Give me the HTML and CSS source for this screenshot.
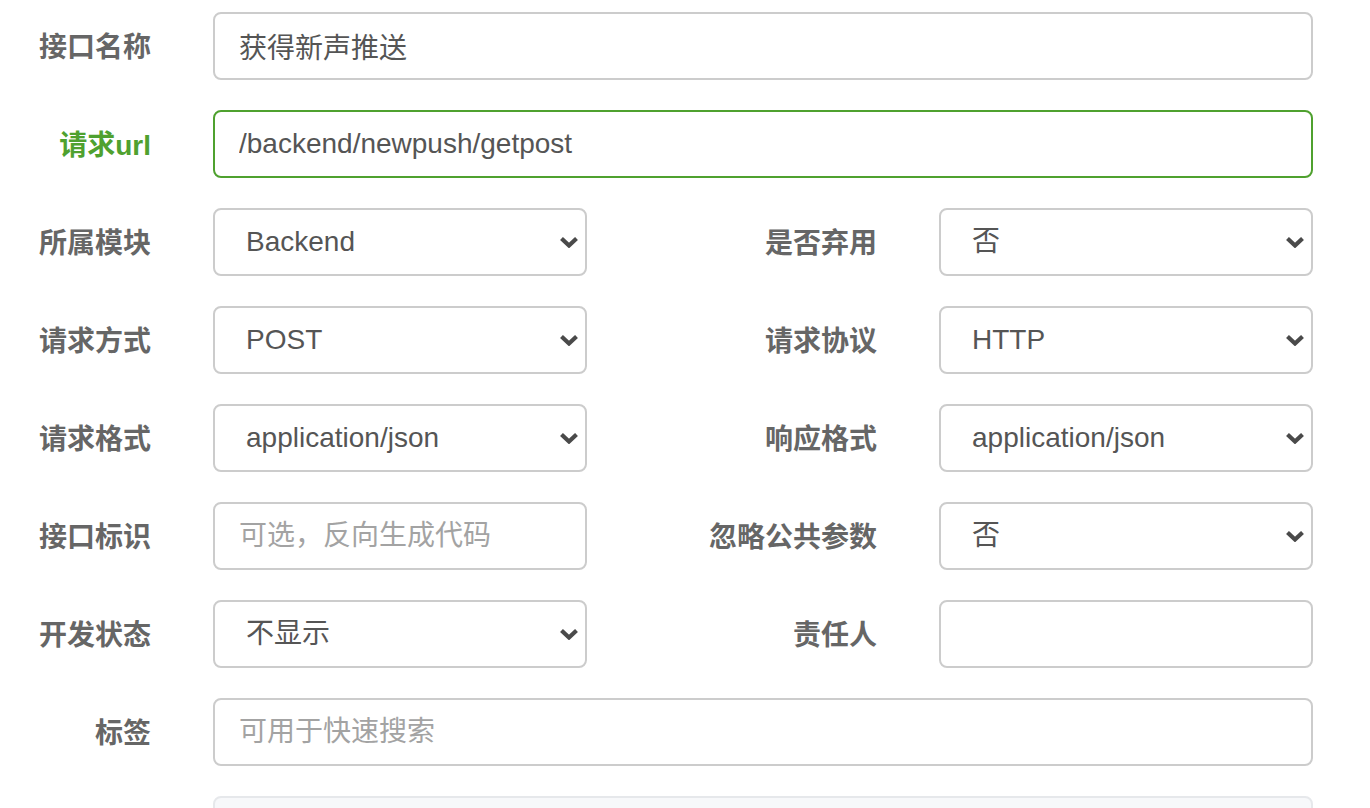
FILE: index.html
```html
<!DOCTYPE html>
<html lang="zh-CN">
<head>
<meta charset="utf-8">
<title>接口编辑</title>
<link rel="stylesheet" href="styles.css">
</head>
<body>
<form class="form">
  <div class="row">
    <label class="label">接口名称</label>
    <input class="control span3" type="text" value="获得新声推送">
  </div>
  <div class="row success">
    <label class="label">请求url</label>
    <input class="control span3" type="text" value="/backend/newpush/getpost">
  </div>
  <div class="row">
    <label class="label">所属模块</label>
    <div class="select-wrap">
      <select class="control select"><option>Backend</option></select>
      <svg class="chev" viewBox="0 0 20 12" width="20" height="12"><path d="M2.5 2.5 L10 9.5 L17.5 2.5" fill="none" stroke="#4a4a4a" stroke-width="4.2"/></svg>
    </div>
    <label class="label">是否弃用</label>
    <div class="select-wrap">
      <select class="control select"><option>否</option></select>
      <svg class="chev" viewBox="0 0 20 12" width="20" height="12"><path d="M2.5 2.5 L10 9.5 L17.5 2.5" fill="none" stroke="#4a4a4a" stroke-width="4.2"/></svg>
    </div>
  </div>
  <div class="row">
    <label class="label">请求方式</label>
    <div class="select-wrap">
      <select class="control select"><option>POST</option></select>
      <svg class="chev" viewBox="0 0 20 12" width="20" height="12"><path d="M2.5 2.5 L10 9.5 L17.5 2.5" fill="none" stroke="#4a4a4a" stroke-width="4.2"/></svg>
    </div>
    <label class="label">请求协议</label>
    <div class="select-wrap">
      <select class="control select"><option>HTTP</option></select>
      <svg class="chev" viewBox="0 0 20 12" width="20" height="12"><path d="M2.5 2.5 L10 9.5 L17.5 2.5" fill="none" stroke="#4a4a4a" stroke-width="4.2"/></svg>
    </div>
  </div>
  <div class="row">
    <label class="label">请求格式</label>
    <div class="select-wrap">
      <select class="control select"><option>application/json</option></select>
      <svg class="chev" viewBox="0 0 20 12" width="20" height="12"><path d="M2.5 2.5 L10 9.5 L17.5 2.5" fill="none" stroke="#4a4a4a" stroke-width="4.2"/></svg>
    </div>
    <label class="label">响应格式</label>
    <div class="select-wrap">
      <select class="control select"><option>application/json</option></select>
      <svg class="chev" viewBox="0 0 20 12" width="20" height="12"><path d="M2.5 2.5 L10 9.5 L17.5 2.5" fill="none" stroke="#4a4a4a" stroke-width="4.2"/></svg>
    </div>
  </div>
  <div class="row">
    <label class="label">接口标识</label>
    <input class="control" type="text" placeholder="可选，反向生成代码">
    <label class="label">忽略公共参数</label>
    <div class="select-wrap">
      <select class="control select"><option>否</option></select>
      <svg class="chev" viewBox="0 0 20 12" width="20" height="12"><path d="M2.5 2.5 L10 9.5 L17.5 2.5" fill="none" stroke="#4a4a4a" stroke-width="4.2"/></svg>
    </div>
  </div>
  <div class="row">
    <label class="label">开发状态</label>
    <div class="select-wrap">
      <select class="control select"><option>不显示</option></select>
      <svg class="chev" viewBox="0 0 20 12" width="20" height="12"><path d="M2.5 2.5 L10 9.5 L17.5 2.5" fill="none" stroke="#4a4a4a" stroke-width="4.2"/></svg>
    </div>
    <label class="label">责任人</label>
    <input class="control" type="text" value="">
  </div>
  <div class="row">
    <label class="label">标签</label>
    <input class="control span3" type="text" placeholder="可用于快速搜索">
  </div>
  <div class="row">
    <label class="label"></label>
    <textarea class="control span3 readonly" rows="3" readonly></textarea>
  </div>
</form>
</body>
</html>
```
FILE: styles.css
```css
html, body {
  margin: 0;
  padding: 0;
  background: #ffffff;
  overflow: hidden;
}
body {
  font-family: "Liberation Sans", "Noto Sans CJK SC", sans-serif;
  color: #555555;
}
.form {
  padding-top: 12px;
}
.row {
  display: grid;
  grid-template-columns: 151px 374px 228px 374px;
  column-gap: 62px;
  margin-bottom: 30px;
}
.label {
  box-sizing: border-box;
  font-size: 28px;
  font-weight: 700;
  color: #666666;
  text-align: right;
  line-height: 68px;
  height: 68px;
  padding-top: 2px;
  white-space: nowrap;
}
.control {
  box-sizing: border-box;
  display: block;
  width: 100%;
  height: 68px;
  margin: 0;
  padding: 12px 24px;
  font-family: "Liberation Sans", "Noto Sans CJK SC", sans-serif;
  font-size: 28px;
  line-height: 40px;
  color: #555555;
  background: #ffffff;
  border: 2px solid #cccccc;
  border-radius: 8px;
  outline: none;
}
.control::placeholder {
  color: #a3a3a3;
}
.span3 {
  grid-column: 2 / 5;
}
.success .label {
  color: #4fa12f;
}
.success .control {
  border-color: #4fa12f;
}
.select-wrap {
  position: relative;
}
.select {
  -webkit-appearance: none;
  appearance: none;
  padding-left: 31px;
  padding-right: 50px;
}
.chev {
  position: absolute;
  right: 8px;
  top: 28px;
  pointer-events: none;
}
.readonly {
  height: 120px;
  background: #f7f8fa;
  border-color: #e6e8eb;
  resize: none;
}
```
